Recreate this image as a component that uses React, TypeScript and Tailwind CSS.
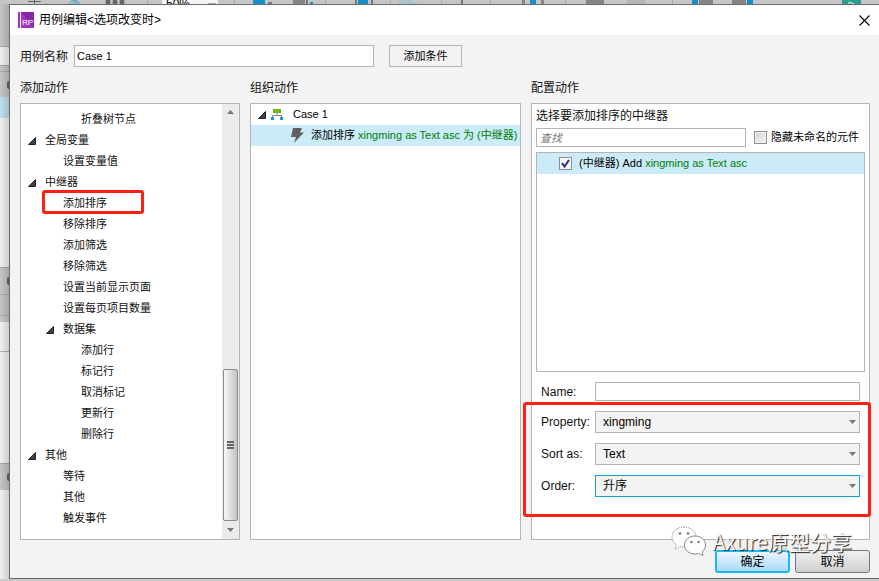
import clsx from 'clsx'
import { useState } from 'react'
import type { ReactNode } from 'react'

type TreeItem = {
	label: string
	level: 0 | 1 | 2
	open?: boolean
	marked?: boolean
}

const actions: TreeItem[] = [
	{ label: '折叠树节点', level: 2 },
	{ label: '全局变量', level: 0, open: true },
	{ label: '设置变量值', level: 1 },
	{ label: '中继器', level: 0, open: true },
	{ label: '添加排序', level: 1, marked: true },
	{ label: '移除排序', level: 1 },
	{ label: '添加筛选', level: 1 },
	{ label: '移除筛选', level: 1 },
	{ label: '设置当前显示页面', level: 1 },
	{ label: '设置每页项目数量', level: 1 },
	{ label: '数据集', level: 1, open: true },
	{ label: '添加行', level: 2 },
	{ label: '标记行', level: 2 },
	{ label: '取消标记', level: 2 },
	{ label: '更新行', level: 2 },
	{ label: '删除行', level: 2 },
	{ label: '其他', level: 0, open: true },
	{ label: '等待', level: 1 },
	{ label: '其他', level: 1 },
	{ label: '触发事件', level: 1 },
]

const indent = ['pl-[7px]', 'pl-[25px]', 'pl-[43px]']

export default function App() {
	return (
		<div className="flex min-h-screen flex-col bg-[#c4c4c4] font-['Liberation_Sans','Noto_Sans_CJK_SC',sans-serif] text-[11px] text-[#111]">
			<ToolbarEdge />
			<div className="flex flex-1">
				<SidebarEdge />
				<main className="flex min-w-0 flex-1 flex-col border-y border-l border-[#6b6b6b] bg-[#f3f3f3]">
					<TitleBar />
					<div className="flex flex-1 flex-col pt-2.5 pr-[9px] pb-[5px] pl-2.5">
						<CaseName />
						<div className="grid flex-1 grid-cols-[220px_4fr_5fr] gap-x-2.5">
							<Column title="添加动作">
								<ActionTree />
							</Column>
							<Column title="组织动作">
								<Organize />
							</Column>
							<Column title="配置动作">
								<Configure />
							</Column>
						</div>
						<Footer />
					</div>
				</main>
			</div>
			<div className="h-[2px] bg-[#c9c9c9]" />
		</div>
	)
}

function ToolbarEdge() {
	return (
		<div className="relative h-1 overflow-hidden bg-[#c6c6c6]">
			<svg width="879" height="4" className="block">
				<path d="M28 1.5h13M34.5 0v4" stroke="#666" fill="none" />
				<path d="M69 4a6 6 0 0 1 11 0M73 4a2 2 0 0 1 4 0" stroke="#3f9fc4" fill="none" />
				<g fill="#666">
					<circle cx="108" cy="2" r="2.5" />
					<circle cx="115" cy="2" r="2.5" />
					<circle cx="122" cy="2" r="2.5" />
				</g>
				<path
					d="M147.5 0v4M234.5 0v4M325.5 0v4M390.5 0v4M441.5 0v4M490.5 0v4M565.5 0v4M672.5 0v4"
					stroke="#aaa"
				/>
				<path d="M162 0h56v4h-56z" fill="#f5f5f5" />
				<path d="M208 4h8" stroke="#555" />
				<path
					d="M253 0h12v4h-12zM310 2h3v2h-3zM358 0h10v4h-10zM530 0h6v4h-6zM692 0h6v4h-6zM747 0h6v4h-6z"
					fill="#168fc9"
				/>
				<path
					d="M293 0h12v4h-12zM586 0h18v4h-18zM699 0h14v4h-14zM732 0h14v4h-14zM522 0h3v4h-3zM541 0h3v4h-3z"
					fill="#858585"
				/>
				<path
					d="M268 2h4v2h-4zM306 0h2v4h-2zM355 0h2v4h-2zM371 0h2v4h-2zM461 0h2v4h-2z"
					fill="#777"
				/>
				<path d="M399 0h13v2h6v2h-19z" fill="#a9c4cf" />
				<path d="M627 0h18v4h-18z" fill="#b6b6b6" />
				<path d="M842 0h19v4h-19z" fill="#2c9c94" />
				<path d="M849 4v-2l5 2" stroke="#e8f5f4" fill="none" />
			</svg>
			<span className="absolute -top-0.5 left-[166px] text-xs leading-3 text-black">50%</span>
		</div>
	)
}

function SidebarEdge() {
	return (
		<div className="relative flex w-[9px] shrink-0 flex-col overflow-hidden bg-[#f1f1f1]">
			<div className="h-[43px] border-b border-[#a8a8a8] bg-[#c6c6c6]" />
			<div className="h-[19px] border-b border-[#a8a8a8]" />
			<div className="h-1.5 border-b border-[#a8a8a8] bg-[#c6c6c6]" />
			<EdgeHeader className="h-[25px]" />
			<div className="h-[21px] bg-[#bfe0ee]" />
			<div className="h-[149px]" />
			<EdgeHeader className="h-7 border-y border-[#a8a8a8]" />
			<div className="h-[21px] border-b border-[#a8a8a8] bg-[#c6c6c6]" />
			<div className="h-1.5 bg-[#c6c6c6]" />
			<div className="h-[30px] border-b border-[#b4b4b4]" />
			<div className="h-[111px]" />
			<EdgeHeader className="h-[27px] border-t border-[#a8a8a8]" />
			<div className="absolute inset-0 bg-linear-to-r from-transparent to-black/15" />
		</div>
	)
}

function EdgeHeader({ className }: { className: string }) {
	return (
		<div className={clsx('flex items-center justify-end bg-[#c6c6c6]', className)}>
			<div className="h-2 w-[2px] rounded-l-full bg-[#5c665c]" />
		</div>
	)
}

function TitleBar() {
	return (
		<header className="flex h-[30px] items-center bg-white pr-2 pl-2">
			<div className="flex size-4 gap-px">
				<div className="w-[2px] bg-[#a233c6]" />
				<div className="flex flex-1 items-end justify-center bg-linear-to-bl from-[#8428a8] from-50% to-[#a233c6] to-50% text-[8px] leading-[10px] text-white">
					RP
				</div>
			</div>
			<h1 className="ml-[5px] text-xs text-black">用例编辑&lt;选项改变时&gt;</h1>
			<button type="button" aria-label="关闭" className="ml-auto p-px">
				<svg width="11" height="11" viewBox="0 0 11 11">
					<path d="M.5 .5l10 10M10.5 .5l-10 10" stroke="#000" strokeWidth="1.1" />
				</svg>
			</button>
		</header>
	)
}

function CaseName() {
	const [name, setName] = useState('Case 1')

	return (
		<div className="flex h-[22px] items-center">
			<label htmlFor="case-name" className="mr-1.5 pt-[2px] text-xs">
				用例名称
			</label>
			<input
				id="case-name"
				value={name}
				onChange={(e) => setName(e.target.value)}
				className="h-full w-[300px] border border-[#b4b4b4] bg-white px-[2px] text-black outline-none"
			/>
			<button
				type="button"
				className="ml-[15px] h-full w-[73px] border border-[#b4b4b4] bg-[#f3f3f3] leading-5 text-black"
			>
				添加条件
			</button>
		</div>
	)
}

function Column({ title, children }: { title: string; children: ReactNode }) {
	return (
		<section className="flex min-w-0 flex-col">
			<h2 className="pt-[11px] pb-[5px] text-xs leading-5">{title}</h2>
			<div className="flex flex-1 border border-[#b4b4b4] bg-white">{children}</div>
		</section>
	)
}

function Caret() {
	return (
		<svg width="8" height="8" viewBox="0 0 8 8" className="shrink-0">
			<path d="M7.5 .5v7h-7z" fill="#444" stroke="#222" />
		</svg>
	)
}

function ActionTree() {
	return (
		<>
			<ul className="flex-1 pt-[5px] pb-2.5">
				{actions.map((item, i) => (
					<li
						key={i}
						className={clsx('relative flex h-[21px] items-center', indent[item.level])}
					>
						<span className="w-[17px] shrink-0">{item.open && <Caret />}</span>
						{item.label}
						{item.marked && (
							<span className="absolute -top-[3px] left-[21px] h-6 w-[102px] rounded-[3px] border-3 border-[#ff2015]" />
						)}
					</li>
				))}
			</ul>
			<div className="flex w-[17px] flex-col items-center bg-[#ebebeb]">
				<Arrow className="h-4 rotate-180" />
				<div className="flex-5" />
				<div className="flex w-[15px] flex-3 flex-col items-center justify-center gap-px rounded-[2px] border border-[#8b8b8b] bg-linear-to-r from-[#f6f6f6] via-[#dcdee0] to-[#bfc2c5]">
					<div className="h-[2px] w-[7px] bg-[#666]" />
					<div className="h-[2px] w-[7px] bg-[#666]" />
					<div className="h-[2px] w-[7px] bg-[#666]" />
				</div>
				<Arrow className="h-[18px]" />
			</div>
		</>
	)
}

function Arrow({ className }: { className?: string }) {
	return (
		<svg width="7" height="4" viewBox="0 0 7 4" className={className}>
			<path d="M0 0h7L3.5 4z" fill="#777" />
		</svg>
	)
}

function Organize() {
	return (
		<ul className="min-w-0 flex-1 whitespace-nowrap text-black">
			<li className="flex h-[21px] items-center pl-[7px]">
				<Caret />
				<svg width="12" height="12" viewBox="0 0 12 12" className="mr-2.5 ml-[5px]">
					<path d="M2 0h8v4H2z" fill="#6cbf0b" />
					<path d="M6 4v3M1.5 9V6.5h9V9" fill="none" stroke="#888" />
					<path d="M0 8h3v3H0zM9 8h3v3H9z" fill="#1a9bd8" />
				</svg>
				Case 1
			</li>
			<li className="flex h-[21px] items-center bg-[#cbebf8] pl-10">
				<svg width="13" height="17" viewBox="0 0 13 17" className="mr-[7px] shrink-0">
					<path d="M2 1h9L9 5.5h4L3 16l2-6H0z" fill="#5f5f5f" />
				</svg>
				<span>
					添加排序 <span className="text-[#008000]">xingming as Text asc 为 (中继器)</span>
				</span>
			</li>
		</ul>
	)
}

function Configure() {
	const [hidden, setHidden] = useState(false)
	const [checked, setChecked] = useState(true)

	return (
		<div className="flex min-w-0 flex-1 flex-col px-1 pb-[42px]">
			<h3 className="pt-[2px] text-xs leading-5">选择要添加排序的中继器</h3>
			<div className="mt-[2px] flex h-[19px] items-center">
				<input
					aria-label="查找"
					placeholder="查找"
					className="h-full min-w-0 flex-1 border border-[#b4b4b4] px-[3px] outline-none placeholder:text-[#777] placeholder:italic"
				/>
				<label className="ml-2 flex items-center gap-1 pr-1.5 whitespace-nowrap text-black">
					<input
						type="checkbox"
						checked={hidden}
						onChange={(e) => setHidden(e.target.checked)}
						className="size-[13px] appearance-none border border-[#8e8e8e] bg-linear-to-br from-[#cfd4da] to-[#f6f6f6] shadow-[inset_0_0_0_1px_#f4f4f4] checked:bg-[#2b3a8c]"
					/>
					隐藏未命名的元件
				</label>
			</div>
			<div className="mt-[5px] flex-1 border border-[#b4b4b4]">
				<label className="flex h-[21px] items-center bg-[#cbebf8] pl-[22px] whitespace-nowrap text-black">
					<span className="mr-[7px] grid size-[13px]">
						<input
							type="checkbox"
							checked={checked}
							onChange={(e) => setChecked(e.target.checked)}
							className="col-start-1 row-start-1 size-[13px] appearance-none border border-[#8e8e8e] bg-[#f4f4f4]"
						/>
						{checked && (
							<svg
								viewBox="0 0 13 13"
								className="pointer-events-none z-10 col-start-1 row-start-1 size-[13px]"
							>
								<path d="M3 6l2.5 3.5L10 3" fill="none" stroke="#26307f" strokeWidth="2" />
							</svg>
						)}
					</span>
					<span>
						(中继器) Add <span className="text-[#008000]">xingming as Text asc</span>
					</span>
				</label>
			</div>
			<div className="mt-2.5 flex h-[19px] items-center px-[5px] text-xs">
				<label htmlFor="name" className="w-[54px] shrink-0">
					Name:
				</label>
				<input
					id="name"
					className="h-full min-w-0 flex-1 border border-[#b4b4b4] px-[3px] outline-none"
				/>
			</div>
			<div className="relative mt-2.5 flex flex-col gap-2.5 px-[5px] text-xs">
				<SelectRow id="property" label="Property:" options={['xingming']} />
				<SelectRow id="sort-as" label="Sort as:" options={['Text', 'Number']} />
				<SelectRow id="order" label="Order:" options={['升序', '降序']} focused />
				<div className="pointer-events-none absolute -top-[9px] -right-1.5 -bottom-5 -left-[13px] rounded-[3px] border-3 border-[#ff2015]" />
			</div>
		</div>
	)
}

interface SelectRowProps {
	id: string
	label: string
	options: string[]
	focused?: boolean
}

function SelectRow({ id, label, options, focused }: SelectRowProps) {
	return (
		<div className="flex h-[22px] items-center">
			<label htmlFor={id} className="w-[54px] shrink-0">
				{label}
			</label>
			<div className="relative h-full min-w-0 flex-1">
				<select
					id={id}
					className={clsx(
						'block h-full w-full appearance-none border bg-[#f3f3f3] px-[7px] text-black outline-none',
						focused ? 'border-[#1a9bd8]' : 'border-[#b4b4b4]',
					)}
				>
					{options.map((option) => (
						<option key={option}>{option}</option>
					))}
				</select>
				<Arrow className="pointer-events-none absolute inset-y-0 right-1 h-full" />
			</div>
		</div>
	)
}

function Footer() {
	return (
		<footer className="relative flex justify-end gap-[5px] pt-2.5 text-xs text-black">
			<button
				type="button"
				className="h-[23px] w-[75px] rounded-[3px] border-2 border-[#18b9f2] bg-linear-to-b from-[#eaf6fd] to-[#a9d9f5] leading-[18px]"
			>
				确定
			</button>
			<button
				type="button"
				className="h-[23px] w-[75px] rounded-[3px] border border-[#777] bg-linear-to-b from-[#f1f1f1] to-[#cfcfcf] leading-5"
			>
				取消
			</button>
			<div className="pointer-events-none absolute -top-3.5 right-[18px] flex items-center gap-1.5">
				<svg width="36" height="30" viewBox="0 0 36 30">
					<g fill="#fff" stroke="#8b8b8b" strokeWidth="1">
						<path
							d="M13 1C6 1 1 5.5 1 11c0 3 1.5 5.6 4 7.500L4 23l5-2.500c1.300.4 2.600.5 4 .5 7 0 12-4.500 12-10S20 1 13 1z"
							strokeDasharray="1 1"
						/>
						<path d="M24 10c-6 0-10.500 4-10.500 9S18 28 24 28c1.300 0 2.500-.2 3.600-.6L32 29.500l-1-3.700c2.300-1.600 3.500-4 3.500-6.800C34.500 14 30 10 24 10z" />
					</g>
					<g fill="#777">
						<circle cx="9" cy="7.5" r="1.3" />
						<circle cx="17" cy="7.5" r="1.3" />
						<circle cx="20.5" cy="16" r="1.2" />
						<circle cx="27.5" cy="16" r="1.2" />
					</g>
				</svg>
				<span className="font-['Noto_Sans_CJK_SC',sans-serif] text-[21px] leading-6 whitespace-nowrap text-[#f6f6f6] [text-shadow:1px_1px_1px_#222]">
					Axure原型分享
				</span>
			</div>
		</footer>
	)
}
